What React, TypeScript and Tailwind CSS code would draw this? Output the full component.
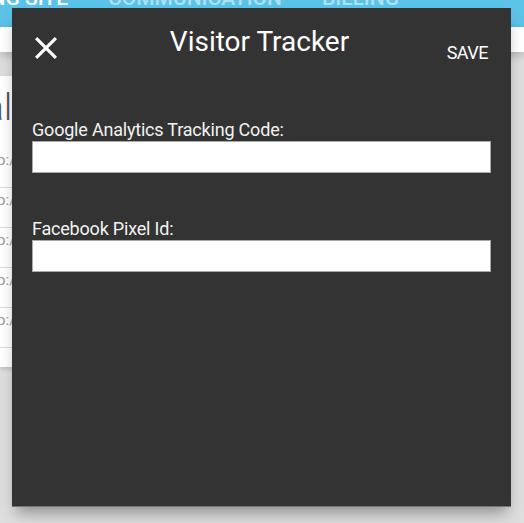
import React from "react";

const font = { fontFamily: "Roboto, 'Noto Sans', sans-serif" };

const rows = ["http://mysite.com/", "http://mysite.com/about", "http://mysite.com/blog", "http://mysite.com/shop", "http://mysite.com/contact"];

function CloseIcon() {
  return (
    <svg width="22" height="22" viewBox="5 5 14 14" aria-hidden>
      <path
        fill="#fff"
        d="M19 6.41L17.59 5 12 10.59 6.41 5 5 6.41 10.59 12 5 17.59 6.41 19 12 13.41 17.59 19 19 17.59 13.41 12z"
      />
    </svg>
  );
}

function Field({ label, className }: { label: string; className?: string }) {
  return (
    <div className={className}>
      <label className="block text-[18px] leading-[20px] tracking-[-0.2px] text-[#f2f2f2]">{label}</label>
      <input
        type="text"
        className="mt-px block h-[32px] w-full border border-[#a9a9a9] bg-white px-2 text-[15px] text-[#333] outline-none"
      />
    </div>
  );
}

export default function App() {
  return (
    <div className="relative h-[523px] w-[524px] overflow-hidden bg-[#dedede]" style={font}>
      {/* page behind the dialog */}
      <div className="flex h-[27px] items-start overflow-hidden bg-[#5bc3e8] text-[21px] font-medium uppercase leading-[20px]">
        <div className="-mt-[12px] flex w-[68px] shrink-0 justify-end whitespace-nowrap text-white">Landing Site</div>
        <div className="-mt-[12px] ml-[40px] whitespace-nowrap text-white/50">Communication</div>
        <div className="-mt-[12px] ml-[40px] whitespace-nowrap text-white/50">Billing</div>
      </div>
      <div className="h-[25px] bg-white shadow-[0_4px_8px_rgba(0,0,0,0.18)]" />
      <div className="mt-[24px] w-[300px] bg-white pb-[19px] shadow-[0_2px_4px_rgba(0,0,0,0.15)]">
        <div className="flex w-[12px] justify-end whitespace-nowrap pt-[12px] text-[36px] font-light leading-[40px] text-[#555]">
          Journal
        </div>
        <div className="mt-[20px]">
          {rows.map((r) => (
            <div key={r} className="h-[40px] border-b border-[#dcdcdc] pt-[3px]">
              <span className="-ml-[21px] block whitespace-nowrap text-[15px] leading-[18px] text-[#9a9a9a]">{r}</span>
            </div>
          ))}
        </div>
      </div>

      {/* dialog */}
      <div className="absolute left-[12px] top-[8px] h-[499px] w-[499px] border-b border-[#777] bg-[#333] shadow-[0_10px_14px_-4px_rgba(0,0,0,0.35)]">
        <div className="grid h-[60px] grid-cols-[1fr_auto_1fr] items-start px-[23px]">
          <button type="button" className="mt-[29px] justify-self-start">
            <CloseIcon />
          </button>
          <h1 className="mt-[18px] pr-1 text-[28px] leading-[32px] text-white">Visitor Tracker</h1>
          <button
            type="button"
            className="mt-[35px] justify-self-end text-[18px] leading-[20px] tracking-[-0.5px] text-white"
          >
            SAVE
          </button>
        </div>
        <div className="px-[20px] pt-[52px]">
          <Field label="Google Analytics Tracking Code:" />
          <Field label="Facebook Pixel Id:" className="mt-[46px]" />
        </div>
      </div>
    </div>
  );
}
